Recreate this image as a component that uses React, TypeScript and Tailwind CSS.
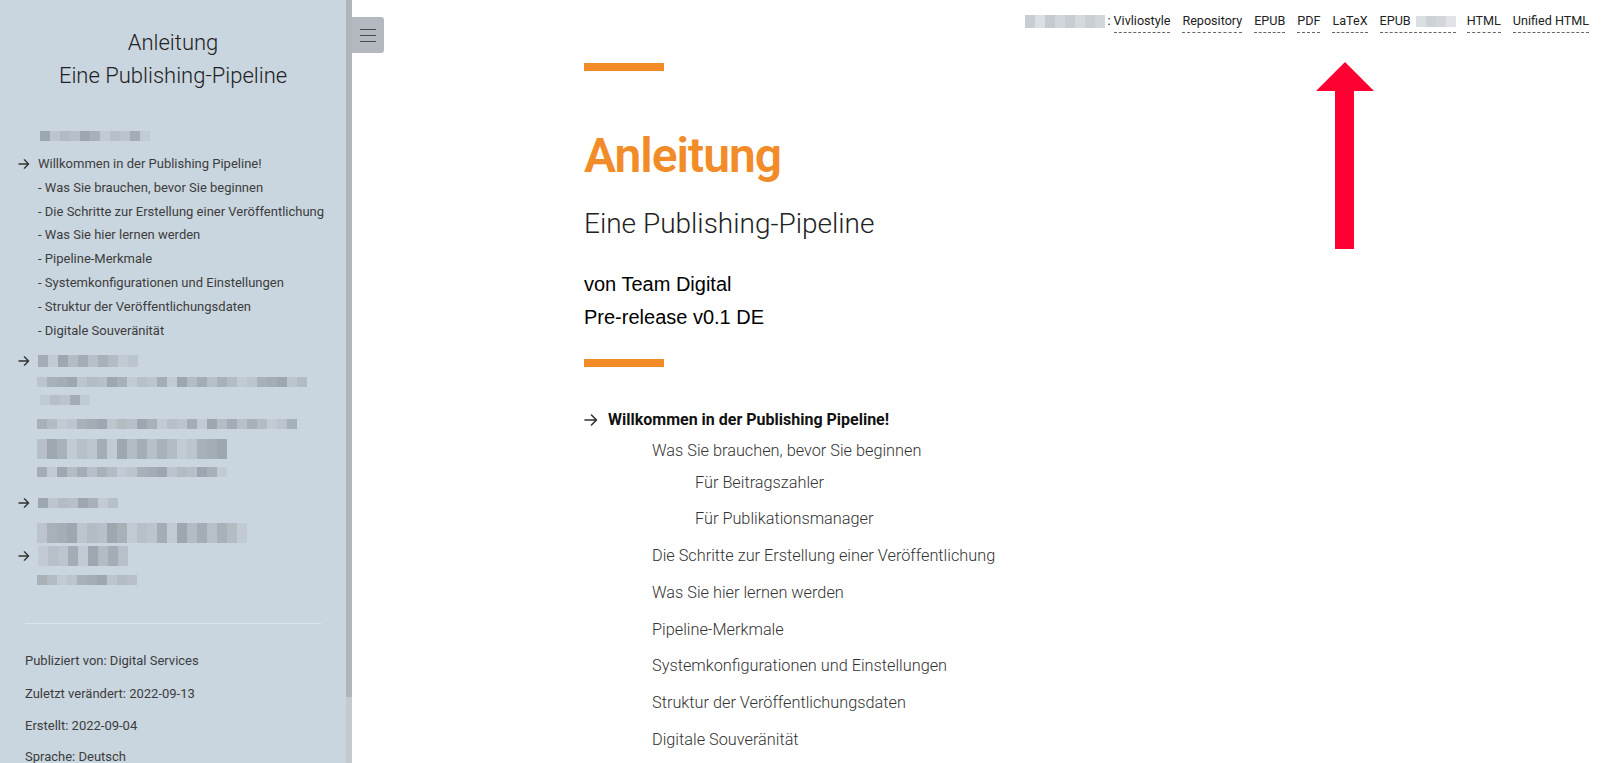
import React from "react";

const palette = [
  "bg-[#b3bbc3]",
  "bg-[#a8b0b8]",
  "bg-[#bcc5cd]",
  "bg-[#9ea7b0]",
  "bg-[#b7c0c8]",
  "bg-[#c2cbd3]",
  "bg-[#a4adb6]",
];

function Blur({ w, seed = 0, h = "h-[12px]" }: { w: number; seed?: number; h?: string }) {
  const n = Math.max(1, Math.round(w / 10));
  return (
    <div className={`flex ${h}`}>
      {Array.from({ length: n }).map((_, i) => (
        <div key={i} className={`w-[10px] h-full ${palette[(i * 5 + seed * 3 + ((i * i) % 3)) % palette.length]}`} />
      ))}
    </div>
  );
}

function Arrow({ className = "" }: { className?: string }) {
  return (
    <svg viewBox="0 0 14 12" className={className} fill="none" stroke="currentColor" strokeWidth="1.6" strokeLinecap="round" strokeLinejoin="round">
      <path d="M1 6h11.5M7.5 1l5 5-5 5" />
    </svg>
  );
}

const sideSubs = [
  "Was Sie brauchen, bevor Sie beginnen",
  "Die Schritte zur Erstellung einer Veröffentlichung",
  "Was Sie hier lernen werden",
  "Pipeline-Merkmale",
  "Systemkonfigurationen und Einstellungen",
  "Struktur der Veröffentlichungsdaten",
  "Digitale Souveränität",
];

function Sidebar() {
  return (
    <aside className="w-[346px] shrink-0 bg-[#c9d5df] h-[763px] overflow-hidden text-[#3d3d3d] font-['Roboto',sans-serif]">
      <div className="pt-[26px] text-center text-[22px] leading-[33px] font-light text-[#222]">
        <div>Anleitung</div>
        <div>Eine Publishing-Pipeline</div>
      </div>
      <div className="mt-[39px] ml-[40px]">
        <Blur w={110} seed={1} h="h-[10px]" />
      </div>
      <div className="mt-[11px] text-[13px] leading-[23.8px]">
        <div className="flex items-center">
          <Arrow className="w-[12px] h-[10px] ml-[18px] mr-[8px] text-[#333]" />
          <span>Willkommen in der Publishing Pipeline!</span>
        </div>
        {sideSubs.map((s) => (
          <div key={s} className="pl-[38px]">- {s}</div>
        ))}
      </div>
      <div className="mt-[12px]">
        <div className="flex items-center h-[14px]">
          <Arrow className="w-[12px] h-[10px] ml-[18px] mr-[8px] text-[#333]" />
          <Blur w={100} seed={2} h="h-[12px]" />
        </div>
        <div className="pl-[37px] mt-[9px] flex flex-col gap-[0px]">
          <Blur w={270} seed={3} h="h-[10px]" />
          <div className="mt-[8px] pl-[3px]"><Blur w={50} seed={4} h="h-[10px]" /></div>
          <div className="mt-[14px]"><Blur w={260} seed={5} h="h-[10px]" /></div>
          <div className="mt-[10px]"><Blur w={190} seed={6} h="h-[20px]" /></div>
          <div className="mt-[8px]"><Blur w={190} seed={2} h="h-[10px]" /></div>
        </div>
        <div className="flex items-center h-[12px] mt-[20px]">
          <Arrow className="w-[12px] h-[10px] ml-[18px] mr-[8px] text-[#333]" />
          <Blur w={80} seed={1} h="h-[10px]" />
        </div>
        <div className="pl-[37px] mt-[14px]">
          <Blur w={210} seed={3} h="h-[20px]" />
        </div>
        <div className="flex items-center h-[14px] mt-[6px]">
          <Arrow className="w-[12px] h-[10px] ml-[18px] mr-[8px] text-[#333]" />
          <Blur w={90} seed={4} h="h-[20px]" />
        </div>
        <div className="pl-[37px] mt-[12px]">
          <Blur w={100} seed={5} h="h-[10px]" />
        </div>
      </div>
      <div className="mx-[25px] mt-[38px] border-t border-[#dde5ec]" />
      <div className="pl-[25px] pt-[25px] text-[13px] leading-[24px]">
        <div>Publiziert von: Digital Services</div>
        <div className="mt-[9px]">Zuletzt verändert: 2022-09-13</div>
        <div className="mt-[8px]">Erstellt: 2022-09-04</div>
        <div className="mt-[7px]">Sprache: Deutsch</div>
      </div>
    </aside>
  );
}

function Scrollbar() {
  return (
    <div className="w-[6px] shrink-0 h-[763px] flex flex-col bg-[#c3cad0]">
      <div className="h-[697px] bg-[#afb5bb]" />
    </div>
  );
}

const navItems = ["Repository", "EPUB", "PDF", "LaTeX"];

function TopNav() {
  return (
    <div className="flex justify-end items-start pr-[17px] pt-[12px] text-[12.6px] leading-[18px] text-[#222] font-['Roboto',sans-serif]">
      <div className="flex items-center">
        <div className="mr-[2px] mt-[1px]"><div className="flex h-[13px] opacity-60"><Blur w={80} seed={2} h="h-[13px]" /></div></div>
        <span>:&nbsp;</span>
      </div>
      <span className="border-b border-dashed border-[#666] pb-[2px]">Vivliostyle</span>
      {navItems.map((n) => (
        <span key={n} className="ml-[12px] border-b border-dashed border-[#666] pb-[2px]">{n}</span>
      ))}
      <span className="ml-[12px] border-b border-dashed border-[#666] pb-[2px] flex items-center">
        EPUB
        <span className="ml-[5px] inline-block opacity-50"><Blur w={40} seed={6} h="h-[11px]" /></span>
      </span>
      <span className="ml-[11px] border-b border-dashed border-[#666] pb-[2px]">HTML</span>
      <span className="ml-[12px] border-b border-dashed border-[#666] pb-[2px]">Unified HTML</span>
    </div>
  );
}

const mainSubs = [
  "Die Schritte zur Erstellung einer Veröffentlichung",
  "Was Sie hier lernen werden",
  "Pipeline-Merkmale",
  "Systemkonfigurationen und Einstellungen",
  "Struktur der Veröffentlichungsdaten",
  "Digitale Souveränität",
];
const mainSubMargins = ["mt-[13px]", "mt-[13px]", "mt-[13px]", "mt-[12px]", "mt-[13px]", "mt-[13px]"];

function Main() {
  return (
    <main className="relative flex-1 h-[763px] overflow-hidden bg-white">
      <TopNav />
      <div className="pl-[232px] pt-[30px] font-['Roboto',sans-serif]">
        <div className="w-[80px] h-[8px] bg-[#f28c28]" />
        <h1 className="mt-[55px] text-[48px] leading-[60px] font-semibold tracking-[-1px] text-[#f28c28]">Anleitung</h1>
        <div className="mt-[20px] text-[28px] leading-[36px] font-light text-[#222]">Eine Publishing-Pipeline</div>
        <div className="mt-[26px] font-['Liberation_Sans',Arial,sans-serif] text-[20px] leading-[33px] text-black">
          <div>von Team Digital</div>
          <div>Pre-release v0.1 DE</div>
        </div>
        <div className="mt-[25px] w-[80px] h-[8px] bg-[#f28c28]" />
        <div className="mt-[41px] text-[16.3px] leading-[24px] text-[#333]">
          <div className="flex items-center font-bold text-[#111] text-[16px]">
            <Arrow className="w-[14px] h-[12px] mr-[10px] text-[#333]" />
            <span>Willkommen in der Publishing Pipeline!</span>
          </div>
          <div className="pl-[68px] font-light">
            <div className="mt-[7px]">Was Sie brauchen, bevor Sie beginnen</div>
            <div className="pl-[43px] mt-[8px]">Für Beitragszahler</div>
            <div className="pl-[43px] mt-[12px]">Für Publikationsmanager</div>
            {mainSubs.map((s, i) => (
              <div key={s} className={mainSubMargins[i]}>{s}</div>
            ))}
          </div>
        </div>
      </div>
      <svg className="absolute left-[964px] top-[62px]" width="58" height="188" viewBox="0 0 58 188">
        <path d="M29 0 L58 29 L38 29 L38 187 L19 187 L19 29 L0 29 Z" fill="#ff0033" />
      </svg>
    </main>
  );
}

function Hamburger() {
  return (
    <div className="absolute left-[352px] top-[17px] w-[32px] h-[36px] bg-[#b3b9bf] rounded-r-[3px] flex flex-col items-center justify-center gap-[5px]">
      <div className="w-[16px] h-[1px] bg-[#4a4a4a]" />
      <div className="w-[16px] h-[1px] bg-[#4a4a4a]" />
      <div className="w-[16px] h-[1px] bg-[#4a4a4a]" />
    </div>
  );
}

export default function App() {
  return (
    <div className="relative flex w-[1606px] h-[763px] overflow-hidden">
      <Sidebar />
      <Scrollbar />
      <Main />
      <Hamburger />
    </div>
  );
}
